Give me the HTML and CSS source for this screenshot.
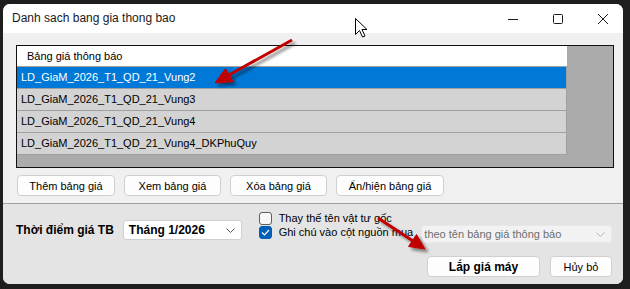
FILE: index.html
```html
<!DOCTYPE html>
<html>
<head>
  <meta charset="utf-8">
  <title>Danh sach bang gia thong bao</title>
  <link rel="stylesheet" href="styles.css">
</head>
<body>
  <div class="window">
    <div class="titlebar">
      <span class="title">Danh sach bang gia thong bao</span>
      <div class="caption">
        <svg width="10" height="10" viewBox="0 0 10 10"><path d="M0 5.5H10" stroke="#1a1a1a" stroke-width="1"/></svg>
        <svg width="10" height="10" viewBox="0 0 10 10"><rect x="0.5" y="0.5" width="9" height="9" rx="1" fill="none" stroke="#1a1a1a" stroke-width="1"/></svg>
        <svg width="10" height="10" viewBox="0 0 10 10"><path d="M0 0L10 10M10 0L0 10" stroke="#1a1a1a" stroke-width="1"/></svg>
      </div>
    </div>

    <div class="client">
      <div class="top-pane">
        <div class="grid">
          <div class="grid-table">
            <div class="grid-head">Bảng giá thông báo</div>
            <div class="grid-row selected">LD_GiaM_2026_T1_QD_21_Vung2</div>
            <div class="grid-row">LD_GiaM_2026_T1_QD_21_Vung3</div>
            <div class="grid-row">LD_GiaM_2026_T1_QD_21_Vung4</div>
            <div class="grid-row">LD_GiaM_2026_T1_QD_21_Vung4_DKPhuQuy</div>
          </div>
        </div>
        <div class="btn-row">
          <button class="btn w98">Thêm bảng giá</button>
          <button class="btn w97">Xem bảng giá</button>
          <button class="btn w97">Xóa bảng giá</button>
          <button class="btn w108">Ẩn/hiện bảng giá</button>
        </div>
      </div>

      <div class="bottom-pane">
        <div class="option-row">
          <div class="date-label">Thời điểm giá TB</div>
          <div class="combo">
            <span>Tháng 1/2026</span>
            <svg width="9" height="5" viewBox="0 0 9 5"><path d="M0.5 0.5L4.5 4.5L8.5 0.5" fill="none" stroke="#555" stroke-width="1"/></svg>
          </div>
          <div class="checks">
            <label class="check"><span class="box"></span>Thay thế tên vật tư gốc</label>
            <label class="check"><span class="box on"><svg width="9" height="7" viewBox="0 0 9 7"><path d="M1 3.5L3.5 6L8 1" fill="none" stroke="#fff" stroke-width="1.2"/></svg></span>Ghi chú vào cột nguồn mua</label>
          </div>
          <div class="combo disabled">
            <span>theo tên bảng giá thông báo</span>
            <svg width="9" height="5" viewBox="0 0 9 5"><path d="M0.5 0.5L4.5 4.5L8.5 0.5" fill="none" stroke="#b5b5b5" stroke-width="1"/></svg>
          </div>
        </div>
        <div class="action-row">
          <button class="btn primary">Lắp giá máy</button>
          <button class="btn cancel">Hủy bỏ</button>
        </div>
      </div>
    </div>
  </div>

  <!-- annotations drawn over the screenshot -->
  <svg class="overlay" width="630" height="289" viewBox="0 0 630 289">
    <defs>
      <filter id="shade" x="-20%" y="-20%" width="140%" height="140%">
        <feDropShadow dx="3" dy="3" stdDeviation="1.6" flood-color="#000" flood-opacity="0.45"/>
      </filter>
    </defs>
    <g fill="#c00000" stroke="#c00000" filter="url(#shade)">
      <line x1="292" y1="40" x2="229" y2="75" stroke-width="3"/>
      <polygon points="215,83 233,81.5 225.5,68.5" stroke-width="1"/>
      <line x1="378" y1="218" x2="413" y2="241" stroke-width="3"/>
      <polygon points="425,249 408.5,246.5 416.5,234.5" stroke-width="1"/>
    </g>
    <path class="cursor" d="M355.5 18.5V34.5L359.5 30.5L362.5 37L365 36L362 29.5H367Z"/>
  </svg>
</body>
</html>
```

FILE: styles.css
```css
body {
  margin: 0;
  width: 630px;
  height: 289px;
  overflow: hidden;
  background-color: #1e1e1e;
  font-family: 'Liberation Sans', Arial, sans-serif;
  font-size: 11px;
  color: #000;
  position: relative;
}

.window {
  margin: 4px 0 0 3px;
  width: 620px;
  height: 280px;
  border-radius: 7px;
  overflow: hidden;
  background-color: #f0f0f0;
}

.titlebar {
  height: 29px;
  background-color: #fff;
  display: flex;
  align-items: center;
  justify-content: space-between;
  padding: 0 15px 0 9px;
}

.title {
  font-size: 12px;
  color: #1a1a1a;
  margin-top: -1px;
}

.caption {
  display: flex;
  gap: 35px;
  align-items: center;
}

.top-pane {
  padding: 12px 9px 7px 13px;
  border-bottom: 1px solid #a0a0a0;
}

.grid {
  height: 123px;
  box-sizing: border-box;
  border: 1px solid #111;
  background-color: #ababab;
}

.grid-table {
  width: 550px;
}

.grid-head {
  height: 20px;
  line-height: 20px;
  padding-left: 10px;
  background-color: #fff;
  border-bottom: 1px solid #a0a0a0;
}

.grid-row {
  height: 21px;
  line-height: 21px;
  padding-left: 4px;
  background-color: #d3d3d3;
  border-bottom: 1px solid #a0a0a0;
  border-right: 1px solid #a0a0a0;
}

.grid-row.selected {
  background-color: #0078d7;
  color: #fff;
}

.btn-row {
  display: flex;
  gap: 9px;
  margin-top: 7px;
  padding-left: 1px;
}

.btn {
  height: 21px;
  padding: 0;
  background-color: #fdfdfd;
  border: 1px solid #d0d0d0;
  border-radius: 4px;
  font-family: 'Liberation Sans', Arial, sans-serif;
  font-size: 11px;
  color: #000;
}

.w97 { width: 97px; }
.w98 { width: 98px; }
.w108 { width: 108px; }

.bottom-pane {
  height: 80px;
  box-sizing: border-box;
  padding: 7px 11px 0 13px;
  background-color: #e4e4e4;
}

.option-row {
  display: flex;
  align-items: flex-start;
}

.date-label {
  width: 107px;
  margin-top: 9px;
  line-height: 20px;
  font-size: 12px;
  font-weight: bold;
}

.combo {
  width: 119px;
  height: 20px;
  box-sizing: border-box;
  margin-top: 9px;
  margin-right: 17px;
  padding: 0 6px 0 5px;
  display: flex;
  align-items: center;
  justify-content: space-between;
  background-color: #fff;
  border: 1px solid #cfcfcf;
  border-radius: 3px;
  font-size: 12px;
  font-weight: bold;
}

.combo.disabled {
  width: 191px;
  height: 18px;
  margin: 14px 0 0 0;
  padding: 0 6px 0 2px;
  background-color: #f2f2f2;
  border-color: #e9e9e9;
  font-size: 11px;
  font-weight: normal;
  color: #6d6d6d;
}

.checks {
  width: 163px;
  display: flex;
  flex-direction: column;
}

.check {
  height: 14px;
  display: flex;
  align-items: center;
  gap: 7px;
  white-space: nowrap;
}

.box {
  width: 13px;
  height: 13px;
  box-sizing: border-box;
  border: 1px solid #5f5f5f;
  border-radius: 3px;
  background-color: #f7f7f7;
  display: flex;
  align-items: center;
  justify-content: center;
}

.box.on {
  border-color: #005fb8;
  background-color: #005fb8;
}

.action-row {
  display: flex;
  justify-content: flex-end;
  gap: 10px;
  margin-top: 13px;
}

.btn.primary {
  width: 113px;
  font-size: 12px;
  font-weight: bold;
}

.btn.cancel {
  width: 62px;
}

.overlay {
  position: absolute;
  left: 0;
  top: 0;
  pointer-events: none;
}

.cursor {
  fill: #fff;
  stroke: #000;
  stroke-width: 1;
}
```
